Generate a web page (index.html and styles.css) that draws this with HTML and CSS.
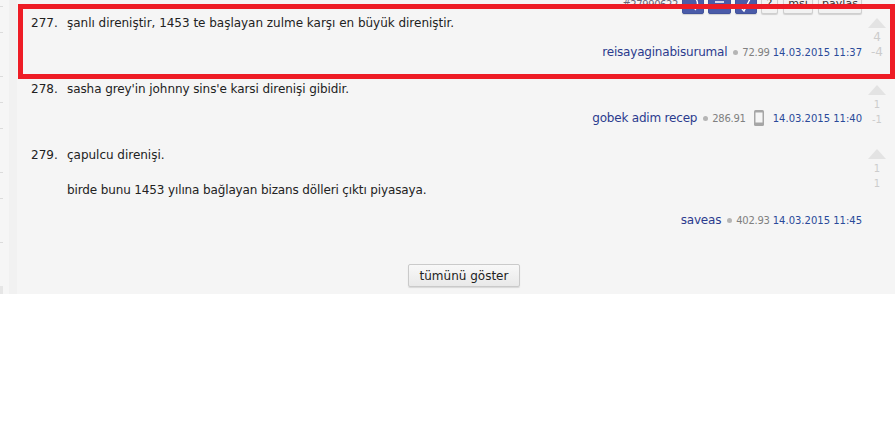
FILE: index.html
```html
<!DOCTYPE html>
<html lang="tr">
<head>
<meta charset="utf-8">
<title>entry</title>
<link rel="stylesheet" href="styles.css">
</head>
<body>
<div class="page">
  <aside class="rail">
    <i class="tick t0"></i><i class="tick t1"></i><i class="tick t2"></i><i class="tick t3"></i><i class="tick t4"></i><i class="tick t5"></i><i class="tick t6"></i><i class="tick t7"></i><i class="tick-end"></i>
  </aside>
  <main class="panel">
    <div class="topbar">
      <span class="entry-id">#27990622</span>
      <span class="btn blue"><svg width="20" height="20" viewBox="0 0 20 20"><path d="M13 6c2 3 2 7-1 11" fill="none" stroke="#fff" stroke-width="1.4"/></svg></span>
      <span class="btn blue b2"><svg width="21" height="20" viewBox="0 0 21 20"><path d="M6 9h9M6 15h9" fill="none" stroke="#fff" stroke-width="1.4"/></svg></span>
      <span class="btn blue"><svg width="20" height="20" viewBox="0 0 20 20"><path d="M6 16l2 2 6-12" fill="none" stroke="#fff" stroke-width="1.4"/></svg></span>
      <span class="btn plain small">?</span><span class="btn plain mid">msj</span><span class="btn plain wide">paylaş</span>
    </div>
    <article class="entry e277">
      <div class="body">
        <div class="row"><span class="num">277.</span><p class="txt">şanlı direniştir, 1453 te başlayan zulme karşı en büyük direniştir.</p></div>
        <div class="meta"><a class="author">reisayaginabisurumal</a><span class="dot"></span><span class="score">72.99</span><span class="date">14.03.2015 11:37</span></div>
      </div>
      <div class="votes big"><span class="arrow"></span><span class="v">4</span><span class="v">-4</span></div>
    </article>
    <article class="entry e278">
      <div class="body">
        <div class="row"><span class="num">278.</span><p class="txt tight">sasha grey'in johnny sins'e karsi direnişi gibidir.</p></div>
        <div class="meta"><a class="author">gobek adim recep</a><span class="dot"></span><span class="score">286.91</span>
          <svg class="phone" width="10" height="16" viewBox="0 0 10 16"><rect width="10" height="16" rx="1.5" fill="#a6a6a6"/><rect x="1.5" y="2.5" width="7" height="10" fill="#f5f5f5"/></svg>
          <span class="date">14.03.2015 11:40</span></div>
      </div>
      <div class="votes"><span class="arrow"></span><span class="v">1</span><span class="v">-1</span></div>
    </article>
    <article class="entry e279">
      <div class="body">
        <div class="row"><span class="num">279.</span><div class="txt"><p class="para">çapulcu direnişi.</p><p class="para tighter">birde bunu 1453 yılına bağlayan bizans dölleri çıktı piyasaya.</p></div></div>
        <div class="meta"><a class="author">saveas</a><span class="dot"></span><span class="score">402.93</span><span class="date">14.03.2015 11:45</span></div>
      </div>
      <div class="votes"><span class="arrow"></span><span class="v">1</span><span class="v">1</span></div>
    </article>
    <div class="more"><button class="show">tümünü göster</button></div>
  </main>
</div>
<div class="highlight"></div>
</body>
</html>
```
FILE: styles.css
```css
* { box-sizing: border-box; }
html, body { margin: 0; padding: 0; background: #fff; }
body { font-family: "DejaVu Sans", Verdana, sans-serif; font-size: 12px; color: #222; overflow: hidden; height: 442px; position: relative; }
.page { display: flex; height: 294px; overflow: hidden; background: #f1f1f1; }
.rail { width: 9px; background: #f6f6f6; position: relative; flex: none; }
.tick { position: absolute; left: 0; width: 3px; height: 1px; background: #dcdcdc; }
.tick-end { position: absolute; left: 0; top: 286px; width: 3px; height: 8px; background: #e6e6e6; }
.t0 { top: 6px; } .t1 { top: 32px; } .t2 { top: 76px; } .t3 { top: 102px; } .t4 { top: 128px; } .t5 { top: 172px; } .t6 { top: 198px; } .t7 { top: 242px; }
.panel { width: 878px; margin-left: 8px; background: #f5f5f5; flex: none; }

.topbar { display: flex; justify-content: flex-end; align-items: center; gap: 4px; height: 22px; margin-top: -8px; padding-right: 33px; }
.entry-id { font-size: 10px; letter-spacing: -0.4px; color: #667; margin-right: 0; padding-top: 2px; }
.btn { height: 22px; border-radius: 2px; font-size: 11px; text-align: center; line-height: 22px; box-shadow: 0 1px 1px rgba(0,0,0,.15); }
.blue { width: 22px; background: #4a5ba9; border: 1px solid #42539c; display: block; overflow: hidden; }
.blue svg { display: block; }
.b2 { width: 23px; }
.plain { background: #f2f2f2; border: 1px solid #cfcfcf; color: #333; line-height: 21px; }
.small { width: 17px; }
.mid { width: 30px; margin-left: 1px; }
.wide { width: 44px; margin-left: 1px; }

.entry { display: flex; padding-left: 14px; padding-bottom: 21px; }
.e277 { padding-top: 1px; padding-bottom: 21px; }
.e278 { padding-bottom: 20px; }
.e279 { padding-bottom: 0; }
.body { flex: 1; min-width: 0; }
.row { display: flex; }
.num { width: 36px; flex: none; line-height: 16px; }
.txt { margin: 0; line-height: 16px; letter-spacing: -0.02px; }
.tight { letter-spacing: -0.08px; }
.para { margin: 0 0 19px; line-height: 16px; }
.para:last-child { margin-bottom: 0; }
.tighter { letter-spacing: -0.13px; }

.meta { display: flex; justify-content: flex-end; align-items: center; height: 16px; margin-top: 13px; }
.e279 .meta { margin-top: 14px; }
.author { color: #2b3b8e; letter-spacing: -0.2px; margin-right: 6px; }
.dot { width: 5px; height: 5px; border-radius: 50%; background: #b5b5b5; margin-right: 4px; margin-top: 1px; }
.score { font-size: 10px; letter-spacing: -0.25px; color: #808080; margin-right: 3px; }
.date { font-size: 10px; color: #2a4a9a; }
.phone { margin: 0 9px 0 5px; }

.votes { flex: none; width: 18px; margin: 4px 9px 0 6px; display: flex; flex-direction: column; align-items: center; color: #ccc; font-size: 10px; }
.votes.big { font-size: 12px; margin-top: 3px; }
.e279 .votes { margin-top: 2px; }
.arrow { width: 0; height: 0; border-left: 9px solid transparent; border-right: 9px solid transparent; border-bottom: 10px solid #e3e3e3; margin-bottom: 2px; }
.v { line-height: 15px; }

.more { display: flex; justify-content: center; padding: 36px 0 0 16px; }
.show { width: 112px; height: 23px; font: 12px "DejaVu Sans", sans-serif; color: #222; background: linear-gradient(#f8f8f8, #e9e9e9); border: 1px solid #cacaca; border-radius: 2px; padding: 0; box-shadow: 0 1px 1px rgba(0,0,0,.12); }

.highlight { position: absolute; left: 18px; top: 4px; width: 877px; height: 75px; border: 5px solid #ee1c25; pointer-events: none; }
```
